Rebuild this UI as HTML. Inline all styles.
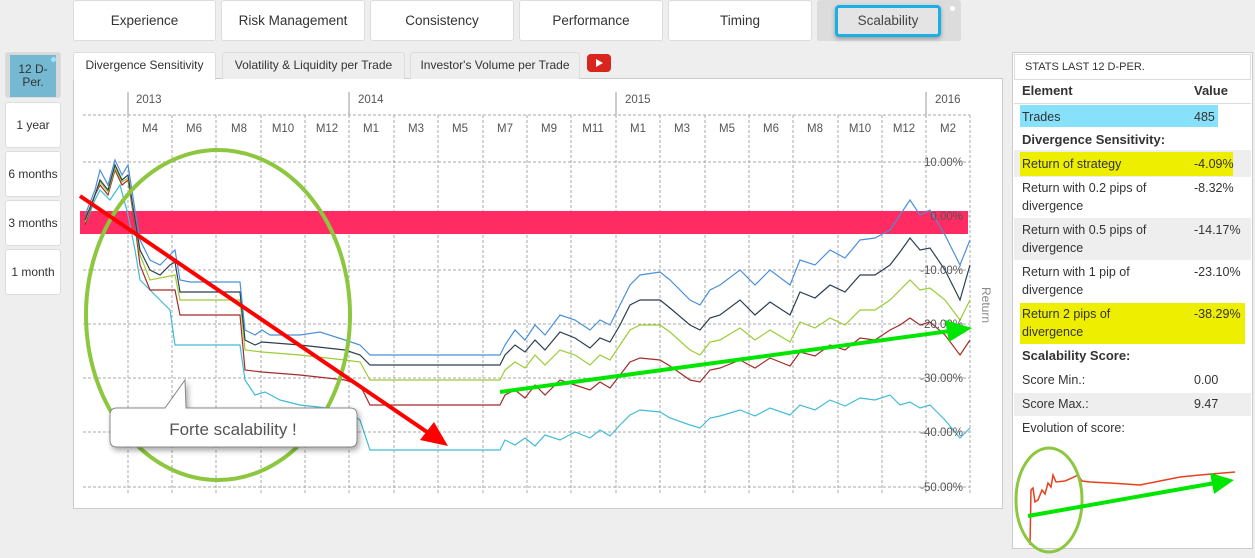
<!DOCTYPE html>
<html><head><meta charset="utf-8"><style>
*{box-sizing:border-box;margin:0;padding:0}
body{width:1255px;height:558px;background:#eeeeee;font-family:"Liberation Sans",sans-serif;position:relative;overflow:hidden;color:#333}
.tb{position:absolute;top:0;height:41px;background:#fff;border:1px solid #ddd;border-radius:3px;font-size:13.5px;text-align:center;line-height:40px;color:#333}
.lb{position:absolute;left:5px;width:56px;height:46px;background:#fff;border:1px solid #ddd;border-radius:3px;font-size:12px;text-align:center;line-height:44px;color:#333;white-space:nowrap}
.st{position:absolute;top:52px;height:27px;border:1px solid #ddd;border-bottom:none;background:#eee;font-size:12px;line-height:25px;color:#333;border-radius:3px 3px 0 0;white-space:nowrap;text-align:center}
.r{position:absolute;left:1022px;width:222px;font-size:12.5px;color:#333;line-height:18px}
.r span{position:absolute;left:172px}
</style></head><body>
<div class="tb" style="left:73px;width:143px">Experience</div>
<div class="tb" style="left:221px;width:144px">Risk Management</div>
<div class="tb" style="left:370px;width:144px">Consistency</div>
<div class="tb" style="left:519px;width:144px">Performance</div>
<div class="tb" style="left:668px;width:144px">Timing</div>
<div style="position:absolute;left:817px;top:0;width:144px;height:41px;background:#dcdcdc;border-radius:3px"></div>
<div style="position:absolute;left:835px;top:5px;width:106px;height:32px;border:3px solid #19b0e8;border-radius:4px;background:#e4e4e4;font-size:13.5px;text-align:center;line-height:26px;color:#444;box-shadow:0 2px 4px rgba(0,0,0,.3)">Scalability</div>
<div style="position:absolute;left:950px;top:6px;width:5px;height:5px;border-radius:50%;background:#fff"></div>

<div class="lb" style="top:52px;background:#d8d8d8;padding:2px 4px"><div style="background:#74b9d1;height:42px;line-height:13px;padding-top:8px;font-size:12px">12 D-<br>Per.</div></div>
<div style="position:absolute;left:51px;top:57px;width:5px;height:5px;border-radius:50%;background:#9fe0ff"></div>
<div class="lb" style="top:102px">1 year</div>
<div class="lb" style="top:151px">6 months</div>
<div class="lb" style="top:200px">3 months</div>
<div class="lb" style="top:249px">1 month</div>

<div style="position:absolute;left:73px;top:78px;width:930px;height:431px;background:#fff;border:1px solid #ccc"></div>
<div class="st" style="left:73px;width:143px;background:#fff;height:28px">Divergence Sensitivity</div>
<div class="st" style="left:222px;width:183px">Volatility &amp; Liquidity per Trade</div>
<div class="st" style="left:410px;width:170px">Investor's Volume per Trade</div>
<div style="position:absolute;left:587px;top:54px;width:24px;height:18px;background:#d9251d;border-radius:4px"></div>
<div style="position:absolute;left:596px;top:59px;width:0;height:0;border-left:7px solid #fff;border-top:4px solid transparent;border-bottom:4px solid transparent"></div>

<svg style="position:absolute;left:0;top:0" width="1255" height="558">
<g stroke="#aaa" stroke-dasharray="3,2" stroke-width="1" fill="none">
<path d="M83 115H970M83 162H970M83 216H970M83 270H970M83 324H970M83 378H970M83 432H970M83 487H970"/>
<path d="M128 115V495M172 115V495M216 115V495M261 115V495M305 115V495M349 115V495M394 115V495M438 115V495M483 115V495M527 115V495M571 115V495M616 115V495M660 115V495M705 115V495M749 115V495M793 115V495M838 115V495M882 115V495M926 115V495M970 115V495"/>
</g>
<g stroke="#999" stroke-width="1"><path d="M128 92V115M349 92V115M616 92V115M926 92V115"/></g>
<g font-size="11.5" fill="#555" font-family="Liberation Sans,sans-serif">
<text x="136" y="103">2013</text><text x="358" y="103">2014</text><text x="625" y="103">2015</text><text x="935" y="103">2016</text>
<g text-anchor="middle"><text x="150" y="132">M4</text><text x="194" y="132">M6</text><text x="239" y="132">M8</text><text x="283" y="132">M10</text><text x="327" y="132">M12</text><text x="371" y="132">M1</text><text x="416" y="132">M3</text><text x="460" y="132">M5</text><text x="505" y="132">M7</text><text x="549" y="132">M9</text><text x="593" y="132">M11</text><text x="638" y="132">M1</text><text x="682" y="132">M3</text><text x="727" y="132">M5</text><text x="771" y="132">M6</text><text x="815" y="132">M8</text><text x="860" y="132">M10</text><text x="904" y="132">M12</text><text x="948" y="132">M2</text></g>
</g>
<rect x="80" y="211" width="888" height="23" fill="#ff2b62"/>
<g fill="none" stroke-width="1.2">
<polyline stroke="#40bcd8" points="85,225 95,200 100,190 110,200 120,185 128,215 135,250 140,280 150,290 160,300 170,310 175,345 240,345 245,380 255,395 265,392 280,400 300,405 345,410 360,420 370,450 500,450 505,440 515,445 525,438 535,446 545,435 560,440 575,432 590,438 600,430 610,436 620,425 630,415 640,410 660,412 670,418 690,425 700,428 710,418 720,416 740,410 755,416 770,408 790,415 800,405 815,410 830,400 845,406 860,398 875,400 890,395 900,405 910,402 920,408 930,405 945,420 960,438 970,428"/>
<polyline stroke="#a52a2a" points="85,225 95,195 100,185 108,195 115,170 122,185 128,180 135,225 140,265 150,290 175,290 180,315 240,315 245,370 262,372 300,375 345,380 360,385 370,405 500,405 505,395 515,390 525,398 535,385 545,395 560,380 575,385 590,390 600,382 610,388 620,375 630,362 640,358 660,360 670,366 690,380 700,382 710,370 720,368 740,360 755,368 770,358 790,366 800,352 815,356 830,345 845,350 860,338 875,340 890,330 900,325 910,318 920,325 930,322 945,335 960,355 970,340"/>
<polyline stroke="#9acd32" points="85,222 95,195 100,182 108,192 115,168 122,182 128,178 135,222 140,255 150,280 175,275 180,300 240,300 245,350 262,352 300,355 345,360 360,362 370,380 500,380 505,370 515,362 525,368 535,355 545,365 560,350 575,355 590,365 600,355 610,360 620,345 630,330 640,325 660,325 670,332 690,350 700,355 710,342 720,340 740,328 755,340 770,330 790,342 800,322 815,328 830,318 845,325 860,310 875,310 890,300 900,290 910,280 920,290 930,288 945,300 960,320 970,300"/>
<polyline stroke="#2c3e50" points="85,220 95,195 100,180 108,190 115,165 122,180 128,175 135,220 140,250 150,270 160,275 170,265 175,262 180,292 240,292 245,340 255,345 262,342 300,345 345,350 360,355 370,365 500,365 505,355 515,345 525,352 535,340 545,350 560,332 575,338 590,348 600,338 610,342 620,325 630,305 640,300 660,300 670,308 690,325 700,330 710,318 720,315 740,300 755,315 770,302 790,315 800,292 815,298 830,285 845,292 860,275 875,275 890,265 900,252 910,238 920,250 930,248 945,270 960,300 970,265"/>
<polyline stroke="#4a90d9" points="85,215 95,190 100,170 108,185 115,160 122,175 128,165 135,210 140,240 150,260 160,265 170,255 175,250 180,280 190,282 240,282 245,330 255,335 262,330 270,335 300,335 320,332 345,340 360,345 370,355 500,355 505,345 515,330 525,340 535,325 545,335 560,315 575,320 590,330 600,320 610,325 620,305 630,285 640,275 660,272 670,280 690,300 700,305 710,290 720,285 740,270 755,285 770,270 790,285 800,260 815,265 830,250 845,258 860,240 875,238 890,230 900,215 910,200 920,215 930,210 945,235 960,265 970,240"/>
</g>
<g font-size="11.5" fill="#555" text-anchor="end" font-family="Liberation Sans,sans-serif">
<text x="963" y="166">10.00%</text><text x="963" y="220">0.00%</text><text x="963" y="274">-10.00%</text><text x="963" y="328">-20.00%</text><text x="963" y="382">-30.00%</text><text x="963" y="436">-40.00%</text><text x="963" y="491">-50.00%</text>
</g>
<text transform="translate(982,287) rotate(90)" font-size="12" fill="#888" font-family="Liberation Sans,sans-serif">Return</text>
<ellipse cx="218" cy="315" rx="132" ry="165" fill="none" stroke="#8dc63f" stroke-width="4"/>
<line x1="80" y1="196" x2="430" y2="434" stroke="#f00" stroke-width="4"/>
<polygon points="448,446 420,440 434,422" fill="#f00"/>
<line x1="500" y1="392" x2="950" y2="331" stroke="#00e600" stroke-width="4"/>
<polygon points="972,328 945,320 949,342" fill="#00e600"/>
<path d="M120 408H165L185 380L186 408H350Q357 408 357 415V440Q357 447 350 447H117Q110 447 110 440V415Q110 408 117 408Z" fill="#fff" stroke="#888" style="filter:drop-shadow(2px 3px 3px rgba(0,0,0,.35))"/>
<text x="233" y="435" text-anchor="middle" font-size="17" fill="#555" font-family="Liberation Sans,sans-serif">Forte scalability !</text>
</svg>

<div style="position:absolute;left:1012px;top:52px;width:241px;height:497px;background:#fff;border:1px solid #ccc"></div>
<div style="position:absolute;left:1014px;top:54px;width:237px;height:26px;border:1px solid #ddd;font-size:11px;line-height:24px;padding-left:10px;color:#333">STATS LAST 12 D-PER.</div>
<div class="r" style="top:82px;font-weight:bold;font-size:13px">Element<span>Value</span></div>
<div style="position:absolute;left:1014px;top:103px;width:237px;height:1px;background:#ddd"></div>
<div style="position:absolute;left:1020px;top:105px;width:198px;height:22px;background:#87e1fb"></div>
<div class="r" style="top:108px">Trades<span>485</span></div>
<div class="r" style="top:131px;font-weight:bold;font-size:13px">Divergence Sensitivity:</div>
<div style="position:absolute;left:1014px;top:150px;width:237px;height:27px;background:#eee"></div>
<div style="position:absolute;left:1020px;top:152px;width:213px;height:24px;background:#eeee00"></div>
<div class="r" style="top:155px">Return of strategy<span>-4.09%</span></div>
<div class="r" style="top:179px">Return with 0.2 pips of<br>divergence<span style="top:0">-8.32%</span></div>
<div style="position:absolute;left:1014px;top:218px;width:237px;height:42px;background:#eee"></div>
<div class="r" style="top:221px">Return with 0.5 pips of<br>divergence<span style="top:0">-14.17%</span></div>
<div class="r" style="top:263px">Return with 1 pip of<br>divergence<span style="top:0">-23.10%</span></div>
<div style="position:absolute;left:1020px;top:303px;width:225px;height:41px;background:#eeee00"></div>
<div class="r" style="top:305px">Return 2 pips of<br>divergence<span style="top:0">-38.29%</span></div>
<div class="r" style="top:347px;font-weight:bold;font-size:13px">Scalability Score:</div>
<div class="r" style="top:371px">Score Min.:<span>0.00</span></div>
<div style="position:absolute;left:1014px;top:393px;width:237px;height:23px;background:#eee"></div>
<div class="r" style="top:395px">Score Max.:<span>9.47</span></div>
<div class="r" style="top:419px">Evolution of score:</div>
<svg style="position:absolute;left:0;top:0" width="1255" height="558">
<polyline fill="none" stroke="#e8401c" stroke-width="1.5" points="1030,545 1031,490 1033,488 1035,502 1038,500 1042,490 1045,494 1048,483 1051,487 1053,475 1056,482 1065,481 1072,478 1078,475 1082,481 1090,482 1110,483 1140,485 1160,481 1180,477 1200,475 1235,472"/>
<ellipse cx="1049" cy="500" rx="33" ry="52" fill="none" stroke="#8dc63f" stroke-width="3"/>
<line x1="1028" y1="516" x2="1215" y2="483" stroke="#00e600" stroke-width="4"/>
<polygon points="1234,480 1210,473 1214,494" fill="#00e600"/>
</svg>
</body></html>
